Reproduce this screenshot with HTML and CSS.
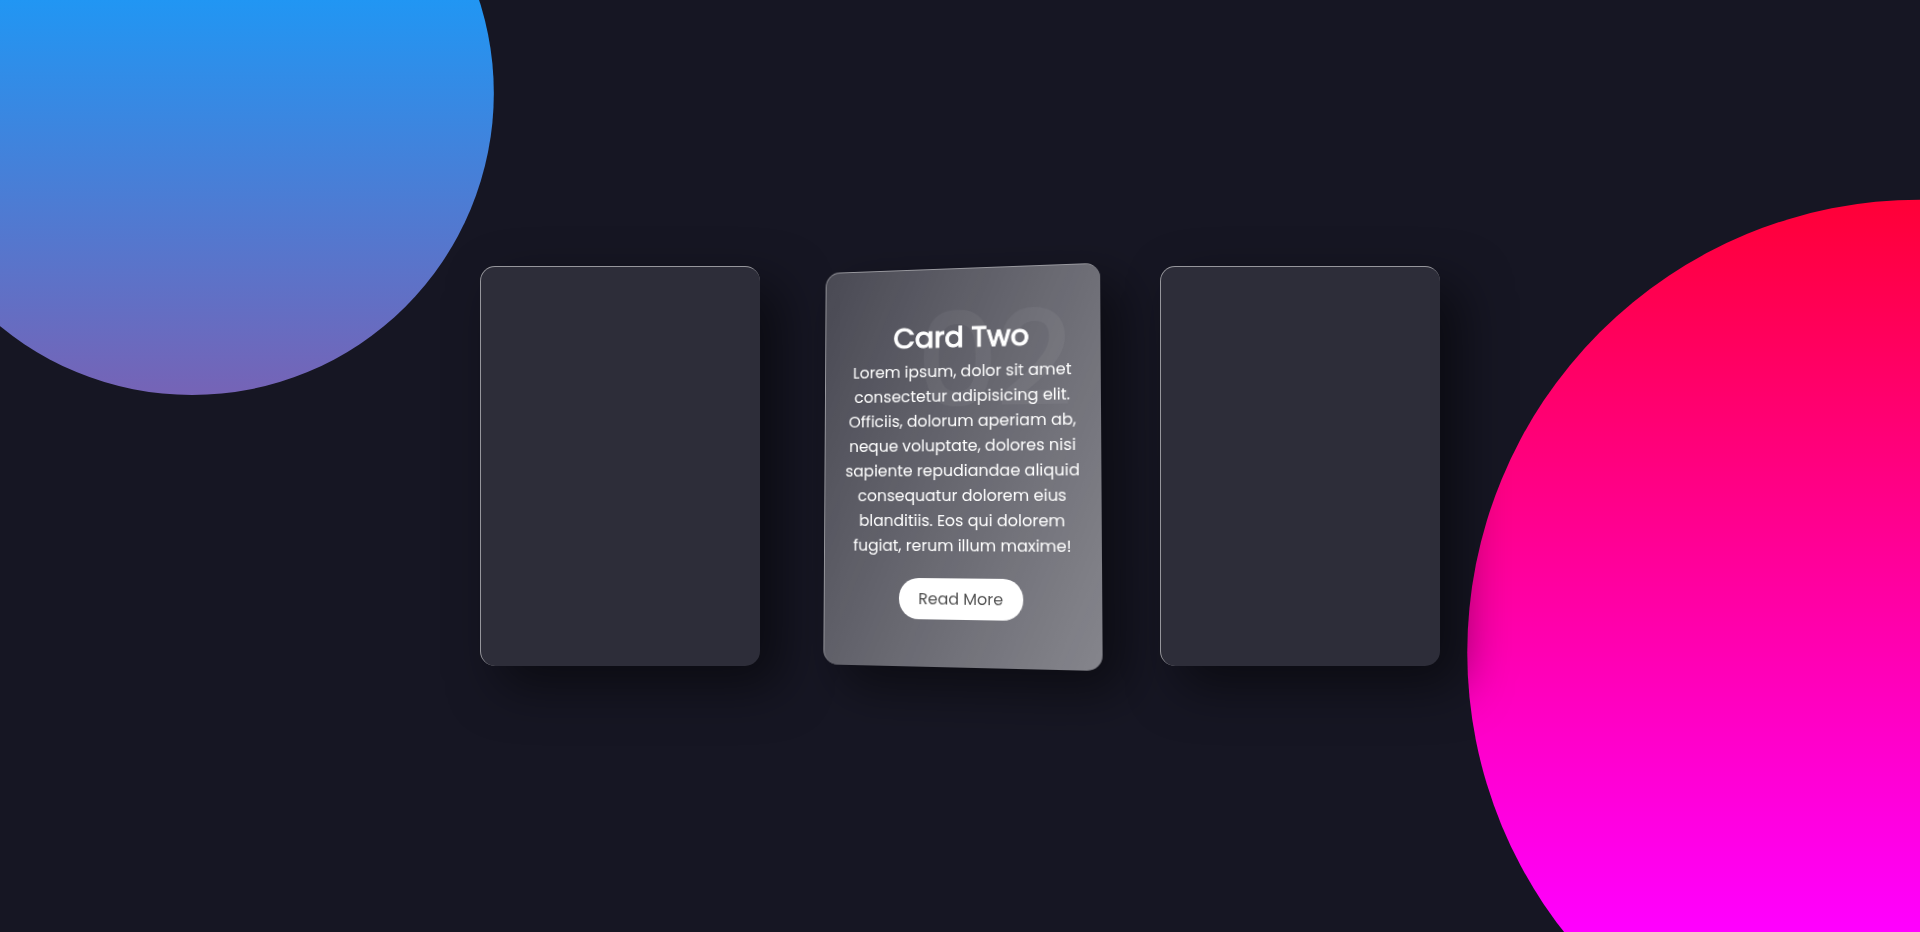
FILE: index.html
```html
<!DOCTYPE html>
<html lang="en">
<head>
<meta charset="utf-8">
<meta name="viewport" content="width=device-width, initial-scale=1">
<title>Glass Cards</title>
<link rel="stylesheet" href="styles.css">
</head>
<body>
<main class="cards">
  <article class="card"></article>
  <article class="card card-tilted">
    <div class="content">
      <span class="number">02</span>
      <h2 class="title">Card Two</h2>
      <p class="text">Lorem ipsum, dolor sit amet consectetur adipisicing elit. Officiis, dolorum aperiam ab, neque voluptate, dolores nisi sapiente repudiandae aliquid consequatur dolorem eius blanditiis. Eos qui dolorem fugiat, rerum illum maxime!</p>
      <a class="more" href="#">Read More</a>
    </div>
    <div class="glare"></div>
  </article>
  <article class="card"></article>
</main>
</body>
</html>
```

FILE: styles.css
```css
* {
  margin: 0;
  padding: 0;
  box-sizing: border-box;
}

body {
  display: flex;
  justify-content: center;
  align-items: center;
  min-height: 100vh;
  background: #161623;
  font-family: Poppins, Inter, "Liberation Sans", sans-serif;
  overflow-x: hidden;
}

/* Background circles */
body::before,
body::after {
  content: "";
  position: absolute;
  inset: 0;
  z-index: -1;
}

body::before {
  background: linear-gradient(#f00, #f0f);
  clip-path: circle(30% at right 70%);
}

body::after {
  background: linear-gradient(#2196f3, #e91e63);
  clip-path: circle(20% at 10% 10%);
}

.cards {
  display: flex;
  flex-wrap: wrap;
  justify-content: center;
  gap: 60px;
}

.card {
  position: relative;
  display: flex;
  justify-content: center;
  align-items: center;
  width: 280px;
  min-height: 400px;
  overflow: hidden;
  border-top: 1px solid rgba(255, 255, 255, 0.5);
  border-left: 1px solid rgba(255, 255, 255, 0.5);
  border-radius: 15px;
  background: rgba(255, 255, 255, 0.1);
  box-shadow: 20px 20px 50px rgba(0, 0, 0, 0.5);
}

.card-tilted {
  transform: perspective(1000px) rotateX(2.6deg) rotateY(-8.8deg);
  will-change: transform;
}

.content {
  padding: 20px;
  text-align: center;
  color: #fff;
}

.number {
  position: absolute;
  top: 18px;
  right: 29px;
  font-size: 128px;
  font-weight: 400;
  line-height: 150px;
  color: #fff;
  -webkit-text-stroke: 4px #fff;
  opacity: 0.05;
}

.title {
  font-size: 29px;
  font-weight: 400;
  line-height: 44px;
  -webkit-text-stroke: 1px #fff;
}

.text {
  font-size: 16px;
  line-height: 25px;
}

.more {
  display: inline-block;
  margin-top: 20px;
  padding: 8px 20px;
  border-radius: 20px;
  background: #fff;
  color: #000;
  font-size: 16px;
  line-height: 25px;
  text-decoration: none;
}

.glare {
  position: absolute;
  top: 50%;
  left: 50%;
  width: 800px;
  height: 800px;
  background: linear-gradient(0deg, rgba(255, 255, 255, 0), #fff);
  transform: translate(-50%, -50%) rotate(113deg);
  opacity: 0.55;
  pointer-events: none;
}
```
